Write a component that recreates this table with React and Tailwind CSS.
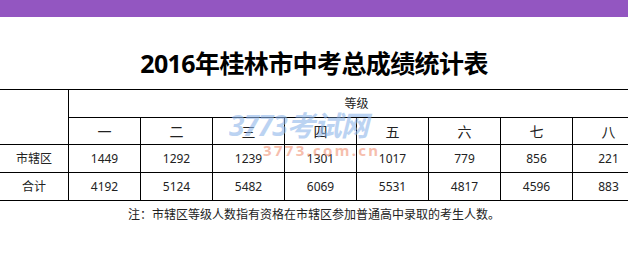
import React from 'react';

const grades = ['一', '二', '三', '四', '五', '六', '七', '八'];
const rows = [
  { name: '市辖区', values: [1449, 1292, 1239, 1301, 1017, 779, 856, 221] },
  { name: '合计', values: [4192, 5124, 5482, 6069, 5531, 4817, 4596, 883] },
];

const cell = 'bg-white flex items-center justify-center';

const App = () => {
  return (
    <div className="w-[628px] h-[273px] overflow-hidden bg-white relative font-['Noto_Sans','Noto_Sans_CJK_SC',sans-serif] text-[#222]">
      <div className="h-[17px] bg-[#9356c1]" />

      <h1 className="pt-[34px] pb-[13px] text-center text-[25px] leading-[25px] font-bold text-black tracking-[-0.6px]">
        2016年桂林市中考总成绩统计表
      </h1>

      {/* table */}
      <div className="ml-[-1px] w-[650px] bg-black p-px grid grid-cols-[68px_repeat(8,71px)] grid-rows-[27px_26px_27px_27px] gap-px text-[12px]">
        <div className={`${cell} row-span-2`} />
        <div className={`${cell} col-span-8`}>等级</div>
        {grades.map((g) => (
          <div key={g} className={`${cell} text-[14px]`}>
            {g}
          </div>
        ))}
        {rows.map((r) => (
          <React.Fragment key={r.name}>
            <div className={cell}>{r.name}</div>
            {r.values.map((v, i) => (
              <div key={i} className={cell}>
                {v}
              </div>
            ))}
          </React.Fragment>
        ))}
      </div>

      <p className="mt-[6px] text-center text-[12px] leading-[16px] text-[#222]">
        注：市辖区等级人数指有资格在市辖区参加普通高中录取的考生人数。
      </p>

      {/* watermark */}
      <div className="absolute left-[229px] top-[111px] pointer-events-none select-none">
        <div className="text-[28px] leading-[28px] font-bold italic text-[#8fb6ea] opacity-60 tracking-[-1px]">
          3773考试网
        </div>
        <div className="ml-[34px] mt-[4px] text-[15px] leading-[15px] font-bold text-[#ef8a6a] opacity-55 tracking-[2.3px]">
          3773.com.cn
        </div>
      </div>
    </div>
  );
};

export default App;
